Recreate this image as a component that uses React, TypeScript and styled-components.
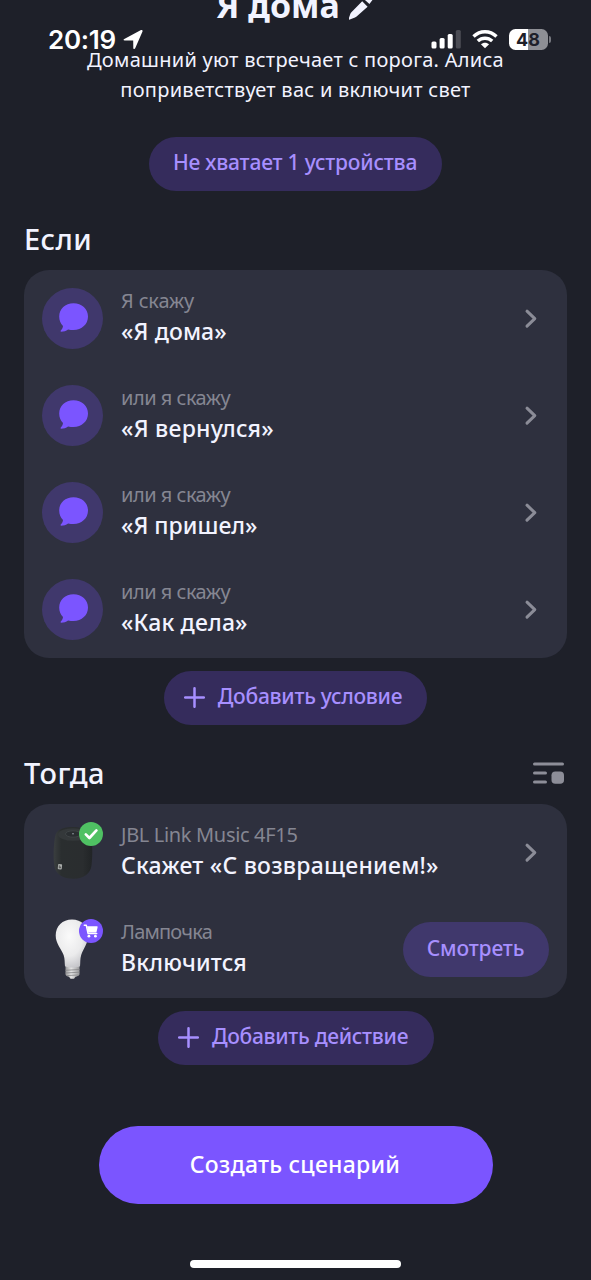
import React from 'react';
import styled, { createGlobalStyle } from 'styled-components';

const GlobalStyle = createGlobalStyle`
  body { margin: 0; background: #1e2029; }
  * { box-sizing: border-box; }
  button { border: 0; margin: 0; padding: 0; font: inherit; }
`;

const Screen = styled.main`
  position: relative;
  width: 591px;
  height: 1280px;
  overflow: hidden;
  display: flex;
  flex-direction: column;
  background: #1e2029;
  color: #f2f3ff;
  font-family: 'Noto Sans', sans-serif;
`;

const StatusBar = styled.div`
  position: absolute;
  top: 24px;
  left: 48px;
  right: 40px;
  height: 30px;
  display: flex;
  align-items: center;
  justify-content: space-between;
  color: #fff;
`;

const StatusGroup = styled.div`
  display: flex;
  align-items: center;
`;

const Clock = styled.span`
  font: 600 26px/30px Inter, sans-serif;
  letter-spacing: -0.3px;
  margin-right: 7px;
  padding-top: 2px;
`;

const Battery = styled.div`
  width: 39px;
  height: 21px;
  margin-left: 11px;
  border-radius: 6.5px;
  background: linear-gradient(90deg, #fff 48%, #8e8f95 48%);
  color: #1e2029;
  text-align: center;
  font: 700 18px/21px Inter, sans-serif;
`;

const BatteryTip = styled.span`
  width: 2.5px;
  height: 7px;
  margin-left: 1px;
  border-radius: 0 3px 3px 0;
  background: #77787f;
`;

const Header = styled.header`
  flex: none;
  height: 219px;
  display: flex;
  flex-direction: column;
  align-items: center;
`;

const Title = styled.h1`
  display: flex;
  align-items: center;
  gap: 9px;
  margin: -15px 0 19px;
  font-size: 34px;
  line-height: 40px;
  font-weight: 700;
`;

const Description = styled.p`
  margin: 1px 0 31.5px;
  font-size: 20px;
  line-height: 30px;
  text-align: center;
  white-space: nowrap;
  letter-spacing: 0.27px;
`;

const Line = styled.span`
  display: block;
`;

const Pill = styled.button<{ $width: number; $raised?: boolean; $spacing?: number }>`
  flex: none;
  width: ${p => p.$width}px;
  height: 54.5px;
  display: flex;
  align-items: center;
  justify-content: center;
  gap: 13px;
  padding: 0 1px 3.5px 0;
  border-radius: 28px;
  background: ${p => (p.$raised ? '#40386c' : '#352c5c')};
  color: #a78fff;
  font-size: 21px;
  line-height: 30px;
  font-weight: 500;
  white-space: nowrap;
  letter-spacing: ${p => p.$spacing ?? 0}px;
`;

const AddPill = styled(Pill)`
  padding-right: 5px;
  svg { position: relative; top: 1px; }
`;

const SectionHead = styled.div`
  display: flex;
  align-items: center;
  justify-content: space-between;
  height: 40px;
  margin: 0 27px 11px 24px;
`;

const SectionTitle = styled.h2`
  margin: 0;
  font-size: 29px;
  line-height: 40px;
  font-weight: 500;
  letter-spacing: 0.4px;
`;

const Card = styled.section`
  margin: 0 24px 12.5px;
  border-radius: 25px;
  background: #2e303e;
`;

const Row = styled.div`
  display: flex;
  align-items: center;
  height: 97px;
  padding: 0 18px;
`;

const Thumb = styled.div<{ $round?: boolean }>`
  position: relative;
  flex: none;
  width: 61px;
  height: 61px;
  margin-right: 18px;
  border-radius: 50%;
  background: ${p => (p.$round ? '#40386c' : 'none')};
  svg { display: block; }
`;

const Badge = styled.span<{ $color: string }>`
  position: absolute;
  top: 0;
  right: 0;
  width: 24px;
  height: 24px;
  border-radius: 50%;
  background: ${p => p.$color};
`;

const RowText = styled.div`
  flex: 1;
  padding-bottom: 3px;
  white-space: nowrap;
`;

const Caption = styled.div<{ $spacing?: number }>`
  font-size: 20px;
  line-height: 28px;
  color: #858692;
  letter-spacing: ${p => p.$spacing ?? 0}px;
`;

const Value = styled.div<{ $spacing?: number }>`
  font-size: 23px;
  line-height: 32px;
  font-weight: 500;
  letter-spacing: ${p => p.$spacing ?? 0}px;
`;

const Actions = styled.div<{ $after: number }>`
  display: flex;
  justify-content: center;
  margin-bottom: ${p => p.$after}px;
`;

const Primary = styled.button`
  flex: none;
  align-self: center;
  width: 394px;
  height: 78.5px;
  padding: 0 1px 1.5px 0;
  border-radius: 40px;
  background: #7b55ff;
  color: #fff;
  font-size: 23px;
  font-weight: 500;
  letter-spacing: 0.25px;
`;

const HomeBar = styled.div`
  align-self: center;
  width: 211px;
  height: 8px;
  margin-top: 56px;
  border-radius: 4px;
  background: #fff;
`;

const ChevronSlot = styled.span`
  display: flex;
  margin-right: 11px;
`;

const Chevron = () => (
  <svg width="14" height="20" viewBox="0 0 14 20" fill="none" stroke="#8b8c97" strokeWidth="3" strokeLinecap="round" strokeLinejoin="round">
    <path d="M3 2.200 10.800 9.700l-7.800 7.500" />
  </svg>
);

const Bubble = () => (
  <svg width="61" height="61" viewBox="0 0 61 61" fill="#7b55ff">
    <path d="M31.500 15.300c8.300 0 14.500 5.600 14.500 13.200 0 7.800-6.200 13.400-14.500 13.400-1.900 0-3.700-.1-5.400-.5-2.100 1.400-4.400 2.200-6.900 2.300-.7 0-.9-.7-.4-1.200 1.300-1.300 2-2.900 2.200-4.600-2.500-2.200-3.800-5.600-3.800-9.400 0-7.600 6-13.200 14.300-13.200z" />
  </svg>
);

const Plus = () => (
  <svg width="21" height="22" viewBox="0 0 21 22" stroke="#a78fff" strokeWidth="2.500" strokeLinecap="round">
    <path d="M10.500 2.200v18.600M1.200 11.500h18.600" />
  </svg>
);

const Pencil = () => (
  <svg width="26" height="30" viewBox="0 0 26 30" fill="#f2f3ff">
    <path d="M.2 29.800c-.6.200-.9-.2-.7-.8l1.900-5.200c.2-.6.500-1.100 1-1.600L13.200 11.300l5.400 5.400L7.600 26.500c-.5.500-1 .8-1.600 1z" />
    <path d="M15.200 9.300 18.600 6c1.400-1.400 3.300-1.200 4.500 0s1.300 3 0 4.400l-2.700 3.700z" />
  </svg>
);

const LocationArrow = () => (
  <svg width="20" height="21" viewBox="0 0 20 21" fill="#fff">
    <path d="M1.300 10 18 1.100c1-.5 1.900.3 1.500 1.400L12.200 19.300c-.5 1.100-1.900.9-1.900-.3l-.1-7.400-8.500-.1C.3 11.500.1 10.600 1.300 10z" />
  </svg>
);

const Signal = () => (
  <svg width="30" height="20" viewBox="0 0 30 20" fill="#fff">
    <rect x=".5" y="12.500" width="5" height="7" rx="1.500" />
    <rect x="8.600" y="9" width="5" height="10.500" rx="1.500" />
    <rect x="16.700" y="5" width="5" height="14.500" rx="1.500" />
    <rect x="24.800" y="1" width="5" height="18.500" rx="1.500" fill="#4b4c54" />
  </svg>
);

const WifiSlot = styled.span`
  display: flex;
  margin-left: 11px;
`;

const Wifi = () => (
  <svg width="26" height="20" viewBox="0 0 26 20" fill="none" stroke="#fff" strokeWidth="3.400">
    <path d="M1.500 7.400c6.600-6.300 16.400-6.300 23 0" />
    <path d="M5.800 12.100c4.200-3.900 10.200-3.900 14.400 0" />
    <path d="M13 19.300 8.900 15.200c2.300-2.100 5.900-2.100 8.200 0z" fill="#fff" stroke="none" />
  </svg>
);

const ListIcon = () => (
  <svg width="31" height="22" viewBox="0 0 31 22" fill="#8d8e98">
    <rect y=".4" width="31" height="3" rx="1.500" />
    <rect y="9.400" width="14" height="3" rx="1.500" />
    <rect y="18.500" width="14" height="3" rx="1.500" />
    <rect x="18.500" y="9.400" width="12.500" height="12.400" rx="3.800" />
  </svg>
);

const Speaker = () => (
  <svg width="61" height="61" viewBox="0 0 61 61">
    <defs>
      <linearGradient id="speaker" x1="0" x2="1">
        <stop offset="0" stopColor="#3a3e3f" />
        <stop offset=".2" stopColor="#2a2e2f" />
        <stop offset=".75" stopColor="#2a2d2f" />
        <stop offset="1" stopColor="#212426" />
      </linearGradient>
    </defs>
    <path d="M13 15C14 7.500 21 5 30.500 5S48 7.500 49.300 15c1.300 8 1.300 20 .2 28.500C48.700 51 42 56.800 32 56.800c-11 0-18.500-4.800-19.600-12.300C11.200 36 11.500 23.500 13 15z" fill="url(#speaker)" />
    <ellipse cx="31" cy="12.500" rx="15" ry="6.300" fill="#34383a" />
    <ellipse cx="31" cy="12" rx="7.500" ry="3.200" fill="#2a2e31" stroke="#43484a" strokeWidth=".8" />
    <circle cx="31" cy="11.700" r=".8" fill="#9aa2a8" />
    <rect x="16" y="42" width="4" height="5.300" rx=".8" fill="#aaadab" transform="rotate(6 18 44)" />
    <path d="M17.300 43.400v2.500h1.200v-1.300" stroke="#444" strokeWidth=".8" fill="none" />
  </svg>
);

const Bulb = () => (
  <svg width="61" height="61" viewBox="0 0 61 61">
    <defs>
      <radialGradient id="bulb" cx=".42" cy=".35" r=".68">
        <stop offset="0" stopColor="#fafafa" />
        <stop offset=".6" stopColor="#ebebec" />
        <stop offset="1" stopColor="#c4c4c8" />
      </radialGradient>
      <linearGradient id="base" x1="0" x2="1">
        <stop offset="0" stopColor="#98989a" />
        <stop offset=".4" stopColor="#e4e4e4" />
        <stop offset="1" stopColor="#98989a" />
      </linearGradient>
    </defs>
    <path d="M23.500 47h14v8.500c-.8 1.500-2.500 2-4 2.300l-1.500 1.900h-3.500l-1.500-1.900c-1.500-.3-3-.8-3.500-2.300z" fill="url(#base)" />
    <path d="M23.500 51.300l14-.8M23.500 54l14-.8M24.500 56.600l12-.6" stroke="#848487" strokeWidth=".8" />
    <path d="M30 .5c9.500 0 16 6.700 16 16 0 8-4.500 13-6.800 19.500-1.300 4-.7 7.800-1.200 11.300-2.800 1.700-12.200 1.700-15 0-.5-4 0-7.300-1.400-11.300-2.300-6-7.900-11.500-7.900-19.500C13.700 7.200 20.500.5 30 .5z" fill="url(#bulb)" />
  </svg>
);

const Check = () => (
  <svg width="24" height="24" viewBox="0 0 24 24" fill="none" stroke="#fff" strokeWidth="2.700" strokeLinecap="round" strokeLinejoin="round">
    <path d="M6.800 12.400l3.600 3.600 7-7.600" />
  </svg>
);

const Cart = () => (
  <svg width="24" height="24" viewBox="0 0 24 24" fill="#fff">
    <path d="M5.300 6.300h2l1.800 8.200h8.600" fill="none" stroke="#fff" strokeWidth="1.500" strokeLinecap="round" strokeLinejoin="round" />
    <path d="M8 7.300h9.800c.6 0 .9.400.8 1l-1 4.500c-.1.500-.5.700-.9.700H9.300z" />
    <circle cx="9.900" cy="17.200" r="1.400" />
    <circle cx="16.400" cy="17.200" r="1.400" />
  </svg>
);

const phrases = [
  { caption: 'Я скажу', value: '«Я дома»', captionSpacing: -0.15, valueSpacing: 0.1 },
  { caption: 'или я скажу', value: '«Я вернулся»', captionSpacing: -0.5, valueSpacing: 0.25 },
  { caption: 'или я скажу', value: '«Я пришел»', captionSpacing: -0.5, valueSpacing: 0 },
  { caption: 'или я скажу', value: '«Как дела»', captionSpacing: -0.5, valueSpacing: 0.15 },
];

export default function App() {
  return (
    <Screen>
      <GlobalStyle />
      <Header>
        <Title>Я дома<Pencil /></Title>
        <Description>
          <Line>Домашний уют встречает с порога. Алиса</Line>
          <Line>поприветствует вас и включит свет</Line>
        </Description>
        <Pill $width={293} $spacing={-0.2}>Не хватает 1 устройства</Pill>
      </Header>

      <SectionHead><SectionTitle>Если</SectionTitle></SectionHead>
      <Card>
        {phrases.map(p => (
          <Row key={p.value}>
            <Thumb $round><Bubble /></Thumb>
            <RowText>
              <Caption $spacing={p.captionSpacing}>{p.caption}</Caption>
              <Value $spacing={p.valueSpacing}>{p.value}</Value>
            </RowText>
            <ChevronSlot><Chevron /></ChevronSlot>
          </Row>
        ))}
      </Card>
      <Actions $after={28}>
        <AddPill $width={263} $spacing={-0.28}><Plus />Добавить условие</AddPill>
      </Actions>

      <SectionHead><SectionTitle>Тогда</SectionTitle><ListIcon /></SectionHead>
      <Card>
        <Row>
          <Thumb><Speaker /><Badge $color="#4fc163"><Check /></Badge></Thumb>
          <RowText>
            <Caption $spacing={-0.33}>JBL Link Music 4F15</Caption>
            <Value $spacing={0.25}>Скажет «С возвращением!»</Value>
          </RowText>
          <ChevronSlot><Chevron /></ChevronSlot>
        </Row>
        <Row>
          <Thumb><Bulb /><Badge $color="#7b55ff"><Cart /></Badge></Thumb>
          <RowText>
            <Caption $spacing={-0.8}>Лампочка</Caption>
            <Value $spacing={0.2}>Включится</Value>
          </RowText>
          <Pill $width={146} $raised $spacing={-0.15}>Смотреть</Pill>
        </Row>
      </Card>
      <Actions $after={60.5}>
        <AddPill $width={276} $spacing={-0.3}><Plus />Добавить действие</AddPill>
      </Actions>

      <Primary>Создать сценарий</Primary>
      <HomeBar />

      <StatusBar>
        <StatusGroup><Clock>20:19</Clock><LocationArrow /></StatusGroup>
        <StatusGroup>
          <Signal />
          <WifiSlot><Wifi /></WifiSlot>
          <Battery>48</Battery>
          <BatteryTip />
        </StatusGroup>
      </StatusBar>
    </Screen>
  );
}
